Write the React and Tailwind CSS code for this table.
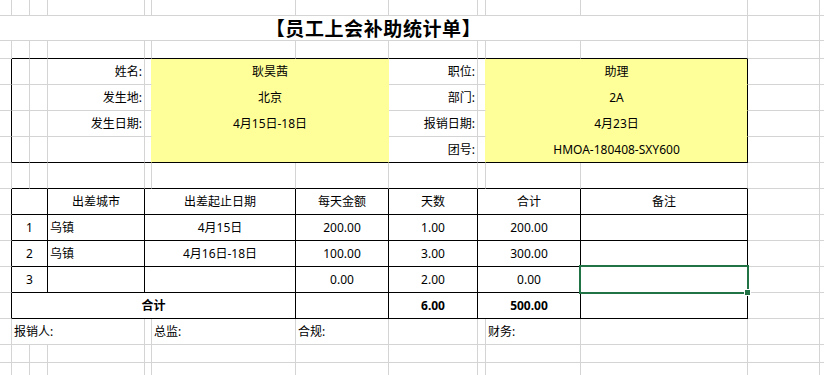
import React from "react";

const R = {
  g: "border-r border-r-[#d4d4d4]",
  k: "border-r border-r-black",
  y: "border-r border-r-[#ffff99]",
  n: "",
};
const B = {
  g: "border-b border-b-[#d4d4d4]",
  k: "border-b border-b-black",
  y: "border-b border-b-[#ffff99]",
  n: "",
};
const SPAN = { 1: "", 2: "col-span-2", 3: "col-span-3", 5: "col-span-5", 11: "col-span-11" };
const ALIGN = { l: "justify-start pl-[2px]", c: "justify-center", r: "justify-end pr-[2px]" };

// plain spreadsheet cells for columns [from..to]
const plain = (from, to, b = "g") => {
  const out = [];
  for (let c = from; c <= to; c++) out.push({ r: c === 12 ? "n" : "g", b });
  return out;
};

const topRows = [
  ["姓名:", "耿昊茜", "职位:", "助理"],
  ["发生地:", "北京", "部门:", "2A"],
  ["发生日期:", "4月15日-18日", "报销日期:", "4月23日"],
  ["", "", "团号:", "HMOA-180408-SXY600"],
];

const bodyRows = [
  ["1", "乌镇", "4月15日", "200.00", "1.00", "200.00"],
  ["2", "乌镇", "4月16日-18日", "100.00", "3.00", "300.00"],
  ["3", "", "", "0.00", "2.00", "0.00"],
];

const rows = [];

// row 0
rows.push(plain(0, 12));
// title row
rows.push([{ s: 11, r: "g", b: "g", t: "【员工上会补助统计单】", a: "c", title: true }, ...plain(11, 12)]);
// spacer above top table
rows.push([...plain(0, 0), ...plain(1, 10, "k"), ...plain(11, 12)]);
// top info table
topRows.forEach(([l1, v1, l2, v2], i) => {
  const last = i === topRows.length - 1;
  const gb = last ? "k" : "g";
  const yb = last ? "k" : "y";
  rows.push([
    { r: "k", b: "g" },
    { r: "g", b: gb },
    { r: "g", b: gb },
    { r: "g", b: gb, t: l1, a: "r" },
    { r: "y", b: gb },
    { s: 2, r: "y", b: yb, t: v1, a: "c", bg: true },
    { r: "g", b: gb, t: l2, a: "r" },
    { r: "y", b: gb },
    { s: 2, r: "k", b: yb, t: v2, a: "c", bg: true },
    ...plain(11, 12),
  ]);
});
// spacer between tables
rows.push([...plain(0, 0), ...plain(1, 10, "k"), ...plain(11, 12)]);
// table header
rows.push([
  { r: "k", b: "g" },
  { s: 2, r: "k", b: "k" },
  { r: "k", b: "k", t: "出差城市", a: "c" },
  { s: 2, r: "k", b: "k", t: "出差起止日期", a: "c" },
  { r: "k", b: "k", t: "每天金额", a: "c" },
  { r: "k", b: "k", t: "天数", a: "c" },
  { s: 2, r: "k", b: "k", t: "合计", a: "c" },
  { r: "k", b: "k", t: "备注", a: "c" },
  ...plain(11, 12),
]);
bodyRows.forEach(([n, city, date, per, days, total]) => {
  rows.push([
    { r: "k", b: "g" },
    { s: 2, r: "k", b: "k", t: n, a: "c" },
    { r: "k", b: "k", t: city, a: "l" },
    { s: 2, r: "k", b: "k", t: date, a: "c" },
    { r: "k", b: "k", t: per, a: "c" },
    { r: "k", b: "k", t: days, a: "c" },
    { s: 2, r: "k", b: "k", t: total, a: "c" },
    { r: "k", b: "k" },
    ...plain(11, 12),
  ]);
});
// total row
rows.push([
  { r: "k", b: "g" },
  { s: 5, r: "k", b: "k", t: "合计", a: "c", f: true },
  { r: "k", b: "k" },
  { r: "k", b: "k", t: "6.00", a: "c", f: true },
  { s: 2, r: "k", b: "k", t: "500.00", a: "c", f: true },
  { r: "k", b: "k" },
  ...plain(11, 12),
]);
// signatures
rows.push([
  { r: "g", b: "g" },
  { s: 3, r: "g", b: "g", t: "报销人:", a: "l" },
  { r: "g", b: "g" },
  { r: "g", b: "g", t: "总监:", a: "l" },
  { r: "g", b: "g", t: "合规:", a: "l" },
  { r: "g", b: "g" },
  { r: "g", b: "g" },
  { r: "g", b: "g", t: "财务:", a: "l" },
  { r: "g", b: "g" },
  ...plain(11, 12),
]);
rows.push(plain(0, 12));
rows.push(plain(0, 12, "n"));

const Cell = ({ cell }) => {
  const cls = [
    "flex items-center whitespace-nowrap",
    SPAN[cell.s || 1],
    R[cell.r],
    B[cell.b],
    cell.a ? ALIGN[cell.a] : "",
    cell.bg ? "bg-[#ffff99]" : "",
    cell.f ? "font-bold" : "",
    cell.title
      ? "text-[19px] leading-[22px] font-bold tracking-[0.6px] font-['Noto_Sans_CJK_SC',sans-serif]"
      : "text-[12px] overflow-hidden",
  ].join(" ");
  return <div className={cls}>{cell.t}</div>;
};

export default function App() {
  return (
    <div className="relative w-[824px] h-[375px] overflow-hidden bg-white text-black font-['Noto_Sans','Noto_Sans_CJK_SC',sans-serif]">
      <div className="grid grid-cols-[12px_18px_18px_97px_7px_144px_93px_89px_8px_95px_167px_72px_4px] grid-rows-[16px_25px_18px_26px_26px_26px_26px_26px_26px_26px_26px_26px_26px_26px_18px_12px]">
        {rows.map((row, i) => row.map((cell, j) => <Cell key={i + "-" + j} cell={cell} />))}
      </div>
      {/* active cell */}
      <div className="absolute left-[579px] top-[265px] w-[170px] h-[29px] border-2 border-[#217346]" />
      <div className="absolute left-[744px] top-[289px] w-[7px] h-[7px] bg-[#217346] border border-white" />
    </div>
  );
}
